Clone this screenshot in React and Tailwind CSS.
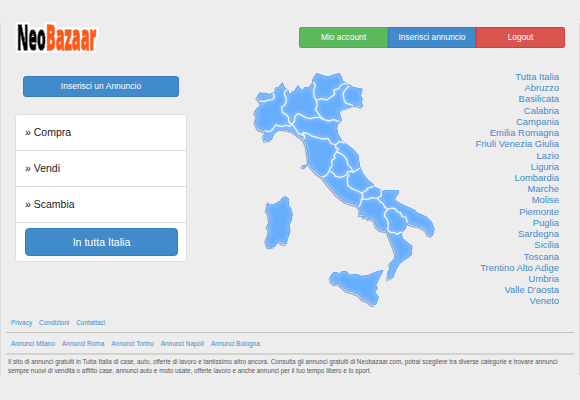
const regions = [
  'Tutta Italia', 'Abruzzo', 'Basilicata', 'Calabria', 'Campania', 'Emilia Romagna',
  'Friuli Venezia Giulia', 'Lazio', 'Liguria', 'Lombardia', 'Marche', 'Molise', 'Piemonte',
  'Puglia', 'Sardegna', 'Sicilia', 'Toscana', 'Trentino Alto Adige', 'Umbria', "Valle D'aosta", 'Veneto',
];

const land = [
  'M35 97L45 82L52 85L62 83L72 87L82 84L95 75L92 65L100 68L112 52L120 68L130 76L132 88L142 80L152 75L158 60L166 70L172 76L180 66L190 68L205 50L205 40L215 24L225 28L238 32L252 34L270 28L284 24L290 36L294 48L310 56L325 66L353 72L350 80L348 92L353 102L350 112L354 126L345 124L338 121L325 122L310 128L295 132L283 140L288 155L290 168L280 175L276 190L280 208L292 228L300 234L325 253L340 270L345 305L355 327L370 345L385 357L387 365L405 373L412 379L420 375L460 375L463 381L453 395L450 405L470 417L510 435L515 442L545 455L560 470L569 493L563 513L550 510L543 495L525 485L500 480L487 473L483 490L470 503L473 520L485 530L502 543L500 570L480 583L465 595L453 615L445 637L428 643L430 620L437 605L433 595L450 580L452 565L443 540L433 515L427 500L405 495L393 483L390 470L380 460L372 464L365 456L355 458L355 450L343 451L345 437L340 423L315 415L300 410L275 390L250 360L230 335L215 325L200 308L190 295L188 270L183 240L175 222L160 212L145 200L125 194L105 193L88 205L80 225L60 228L55 212L62 200L45 195L38 190L30 170L35 152L28 142L35 130L48 120L45 108Z',
  'M68 412L76 419L87 417L98 412L105 407L112 398L121 394L132 402L132 422L138 430L143 448L139 468L134 480L136 500L129 520L124 538L113 537L105 530L97 534L89 545L76 548L68 545L62 526L69 510L72 495L66 483L74 468L70 446L64 437Z',
  'M256 635L265 622L277 621L280 628L292 618L304 619L315 629L335 627L350 633L370 630L390 621L403 617L415 616L408 631L398 650L393 660L398 670L390 681L401 695L397 710L392 720L382 721L370 710L352 703L342 690L320 681L305 678L295 668L280 656L268 659L258 648Z',
  'M169 304L178 299L187 300L183 307L177 308Z',
];

const borders = [
  'M45 108L58 110L65 106L82 104L88 97L84 84',
  'M130 72L120 78L118 88L123 98L124 112L117 122L110 126L112 142L122 148L130 155L132 172L141 178L132 184L122 180L112 185L92 180L84 192L74 200L58 198',
  'M141 178L149 168L149 156L157 146L168 150L182 158L198 161L211 157L224 157L235 163',
  'M205 50L211 62L206 76L207 94L214 106L216 122L212 134L222 149L235 163L252 168L266 164L283 170',
  'M214 106L230 101L245 105L258 96L269 89L266 76L281 71L288 60L300 55L311 57',
  'M313 62L300 75L294 86L297 104L302 114L316 119L325 122',
  'M141 178L151 190L160 205L177 212L174 202L187 205L200 213L218 218L233 222L249 220L257 234L270 240L284 230L300 234',
  'M168 206L179 214L176 224',
  'M272 238L272 248L280 252L273 263L267 272L270 280L260 286L261 301L254 314L248 327L237 335L229 336',
  'M275 261L286 265L298 274L306 285L308 299L318 308L324 322L345 309',
  'M256 319L266 325L272 334L289 337L305 330L307 321L325 318',
  'M312 328L307 338L308 361L320 371L338 378L350 384L365 376L367 370L385 364',
  'M350 384L354 394L350 402L347 416L340 427',
  'M350 402L368 403L380 398L397 400L409 392L408 375',
  'M397 400L407 411L414 416L420 427L430 433L421 441L418 453L427 464L430 478L428 496',
  'M430 433L440 429L450 431L457 440L466 443L472 455L483 457L487 473',
  'M428 496L438 503L448 502L456 508L465 502L475 502',
];

function ItalyMap() {
  return (
    <svg className="block h-[250px] w-[195px]" viewBox="0 0 585 750" aria-label="Italia">
      <defs>
        <clipPath id="land">{land.map((d) => <path key={d} d={d} />)}</clipPath>
        <filter id="soft"><feGaussianBlur stdDeviation="5" /></filter>
        <filter id="shade"><feGaussianBlur stdDeviation="1.5" /></filter>
      </defs>
      <g fill="#9aa9bc" stroke="#9aa9bc" strokeWidth="1" transform="translate(-4 5)" filter="url(#shade)">
        {land.map((d) => <path key={d} d={d} />)}
      </g>
      <g fill="#f6f9fc" transform="translate(-1 2)">{land.map((d) => <path key={d} d={d} />)}</g>
      <g fill="#66adfc">{land.map((d) => <path key={d} d={d} />)}</g>
      <g clipPath="url(#land)" fill="none">
        <g stroke="#80baff" strokeWidth="16" filter="url(#soft)">
          {[...land, ...borders].map((d) => <path key={d} d={d} />)}
        </g>
        <g stroke="#599fed" strokeWidth="3">{land.map((d) => <path key={d} d={d} />)}</g>
        <g stroke="#edf5fd" strokeWidth="4" strokeLinejoin="round">
          {borders.map((d) => <path key={d} d={d} />)}
        </g>
      </g>
    </svg>
  );
}

function Logo() {
  return (
    <svg className="-mt-[14px] block h-[56px] w-[92px]" viewBox="0 0 92 56">
      <filter id="halo" x="-10%" y="-10%" width="120%" height="120%">
        <feMorphology in="SourceAlpha" operator="dilate" radius="1.6" result="grown" />
        <feFlood floodColor="#fff" />
        <feComposite in2="grown" operator="in" result="white" />
        <feMerge><feMergeNode in="white" /><feMergeNode in="SourceGraphic" /></feMerge>
      </filter>
      <g fontFamily="Open Sans, sans-serif" fontWeight="800" fontSize="35" strokeWidth="1.7" filter="url(#halo)">
        <text transform="translate(3 41) scale(.43 1)" textLength="67" lengthAdjust="spacingAndGlyphs" fill="#050505" stroke="#050505">Neo</text>
        <text transform="translate(32 41) scale(.43 1)" textLength="117" lengthAdjust="spacingAndGlyphs" fill="#ff5a0a" stroke="#ff5a0a">Bazaar</text>
      </g>
    </svg>
  );
}

function Links({ items, className }) {
  return <div className={`flex gap-[7px] pl-[5px] text-[6.45px] leading-[8px] text-[#428bca] ${className}`}>{items.map((t) => <a key={t}>{t}</a>)}</div>;
}

export default function App() {
  return (
    <div className="h-[400px] w-[580px] overflow-hidden bg-[#ededed] pt-[23px] font-['Liberation_Sans',Arial,sans-serif]">
      <div className="h-[352px] border-x border-[#dcdcdc]">
        <header className="flex h-[48px] items-start justify-between pl-[13px] pr-[14px]">
          <Logo />
          <nav className="mt-[4px] flex h-[21px] w-[266px] overflow-hidden rounded-[3px] text-center text-[8.4px] leading-[21px] text-white">
            <a className="w-[89px] border border-[#4cae4c] bg-[#5cb85c] leading-[19px]">Mio account</a>
            <a className="w-[88px] border border-[#357ebd] bg-[#428bca] leading-[19px]">Inserisci annuncio</a>
            <a className="w-[89px] border border-[#d43f3a] bg-[#d9534f] leading-[19px]">Logout</a>
          </nav>
        </header>

        <main className="flex h-[245px]">
          <aside className="w-[186px] pl-[14px] pt-[5px]">
            <button className="ml-[8px] block h-[21px] w-[156px] rounded-[3px] border border-[#357ebd] bg-[#428bca] text-[8.5px] leading-[19px] text-white">Inserisci un Annuncio</button>
            <div className="mt-[17px] h-[148px] w-[172px] rounded-[3px] border border-[#dfdfdf] bg-white text-[10.5px] text-[#222]">
              <div className="h-[36px] border-b border-[#ddd] pl-[9px] leading-[35px]">» Compra</div>
              <div className="h-[36px] border-b border-[#ddd] pl-[9px] leading-[35px]">» Vendi</div>
              <div className="h-[36px] border-b border-[#ddd] pl-[9px] leading-[35px]">» Scambia</div>
              <button className="ml-[9px] mt-[5px] block h-[28px] w-[153px] rounded-[4px] border border-[#357ebd] bg-[#428bca] text-[10.6px] leading-[26px] text-white">In tutta Italia</button>
            </div>
          </aside>
          <div className="-mt-[6px] ml-[58px]"><ItalyMap /></div>
          <ul className="ml-auto pr-[20px] text-right text-[9.45px] leading-[11.22px] text-[#428bca]">
            {regions.map((r) => <li key={r}>{r}</li>)}
          </ul>
        </main>

        <footer className="ml-[5px] mr-[5px]">
          <Links className="h-[16px] pt-[3px]" items={['Privacy', 'Condizioni', 'Contattaci']} />
          <div className="h-px bg-[#c3c5ba]" />
          <Links className="h-[20px] pt-[7px]" items={['Annunci Milano', 'Annunci Roma', 'Annunci Torino', 'Annunci Napoli', 'Annunci Bologna']} />
          <div className="h-[2px] bg-[#d2d5cc]" />
          <p className="whitespace-nowrap pl-[2px] pt-[2px] text-[6.33px] leading-[9px] text-[#555]">
            Il sito di annunci gratuiti in Tutta Italia di case, auto, offerte di lavoro e tantissimo altro ancora. Consulta gli annunci gratuiti di Neobazaar.com, potrai scegliere tra diverse categorie e trovare annunci<br />
            sempre nuovi di vendita o affitto case, annunci auto e moto usate, offerte lavoro e anche annunci per il tuo tempo libero e lo sport.
          </p>
        </footer>
      </div>
    </div>
  );
}
